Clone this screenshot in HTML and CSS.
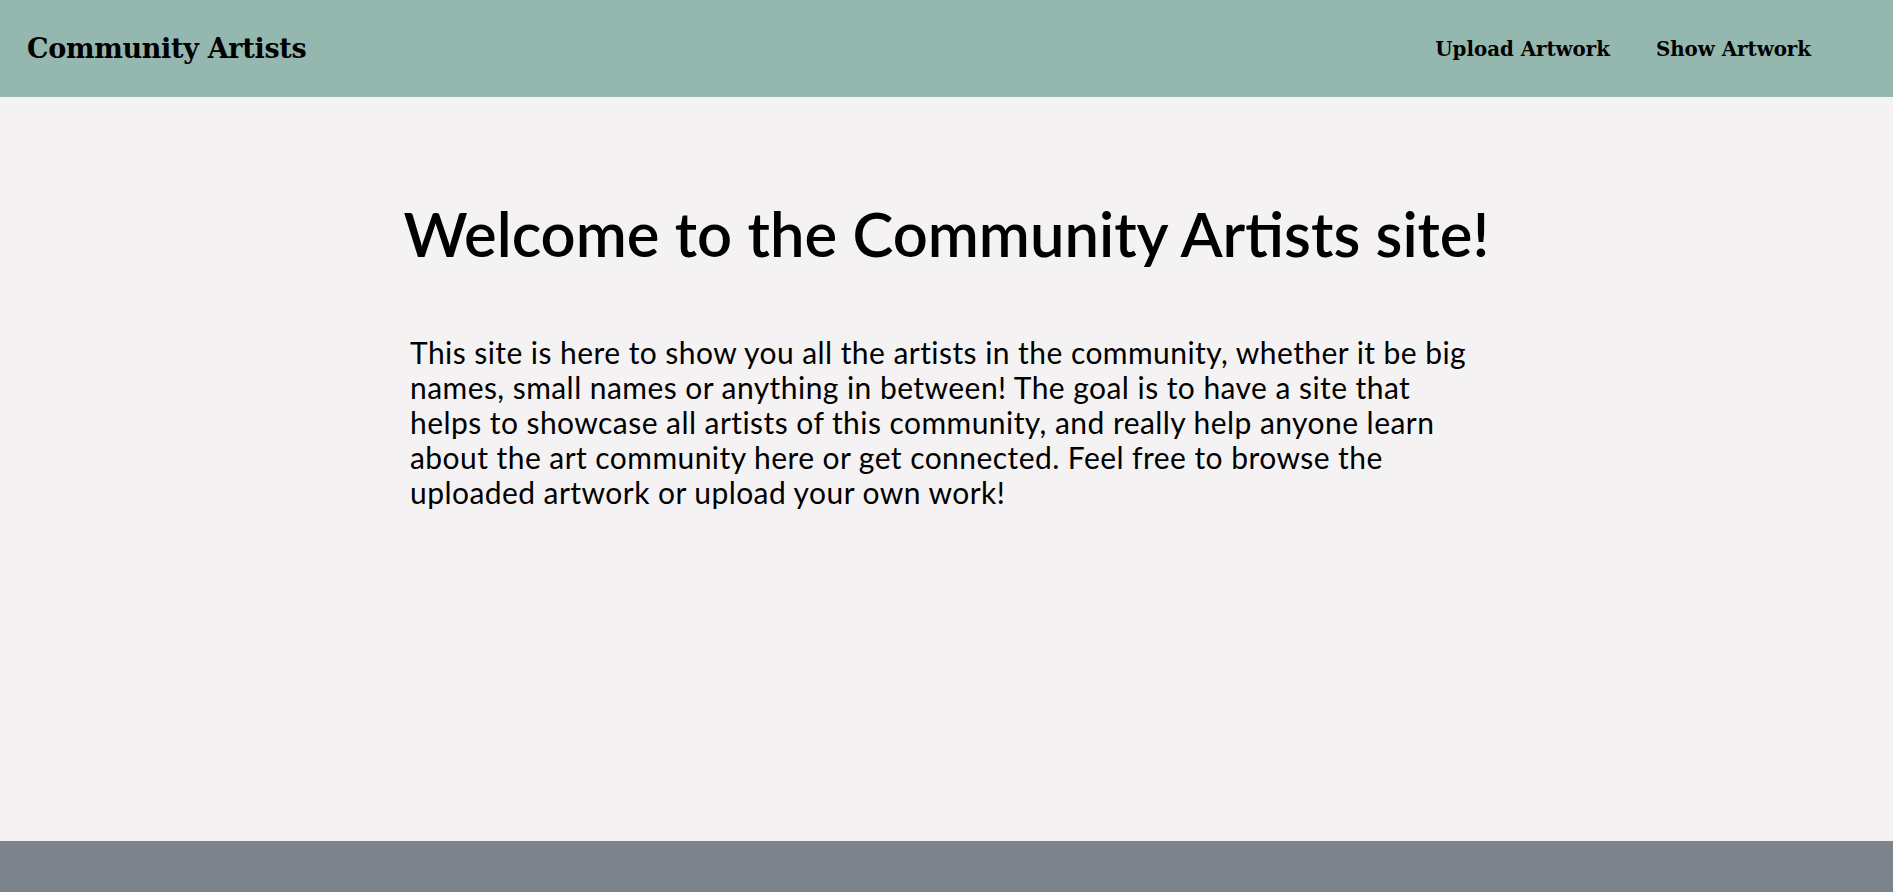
FILE: index.html
```html
<!DOCTYPE html>
<html lang="en">
<head>
<meta charset="utf-8">
<title>Community Artists</title>
<link rel="stylesheet" href="styles.css">
</head>
<body>
<div class="page">
  <header class="topbar">
    <div class="brand">Community Artists</div>
    <nav class="nav">
      <a class="nav-link" href="#">Upload Artwork</a>
      <a class="nav-link" href="#">Show Artwork</a>
    </nav>
  </header>
  <main class="main">
    <h1 class="title">Welcome to the Community Artists site!</h1>
    <p class="intro">This site is here to show you all the artists in the community, whether it be big names, small names or anything in between! The goal is to have a site that helps to showcase all artists of this community, and really help anyone learn about the art community here or get connected. Feel free to browse the uploaded artwork or upload your own work!</p>
  </main>
  <footer class="footer"></footer>
</div>
</body>
</html>
```
FILE: styles.css
```css
html, body {
  margin: 0;
  padding: 0;
}
body {
  background: #f4f2f3;
  color: #000;
  font-family: Lato, "Open Sans", sans-serif;
}
.page {
  display: flex;
  flex-direction: column;
  min-height: 100vh;
}
.topbar {
  height: 97px;
  background: #94b7af;
  display: flex;
  align-items: center;
  justify-content: space-between;
  padding: 0 82px 0 27px;
  box-sizing: border-box;
  font-family: "DejaVu Serif", "Liberation Serif", serif;
}
.brand {
  font-size: 27px;
  font-weight: bold;
  letter-spacing: -0.3px;
}
.nav {
  display: flex;
  gap: 46px;
}
.nav-link {
  color: #000;
  text-decoration: none;
  font-size: 19.8px;
  font-weight: bold;
}
.main {
  flex: 1;
  display: flex;
  flex-direction: column;
  align-items: center;
}
.title {
  margin: 100px 0 0;
  font-size: 61.5px;
  font-weight: 600;
  line-height: 1.2;
}
.intro {
  margin: 64px 0 0;
  width: 1073px;
  font-size: 30px;
  letter-spacing: 0.44px;
  line-height: 35px;
  font-weight: 400;
}
.footer {
  height: 51px;
  background: #7d838c;
}
```
